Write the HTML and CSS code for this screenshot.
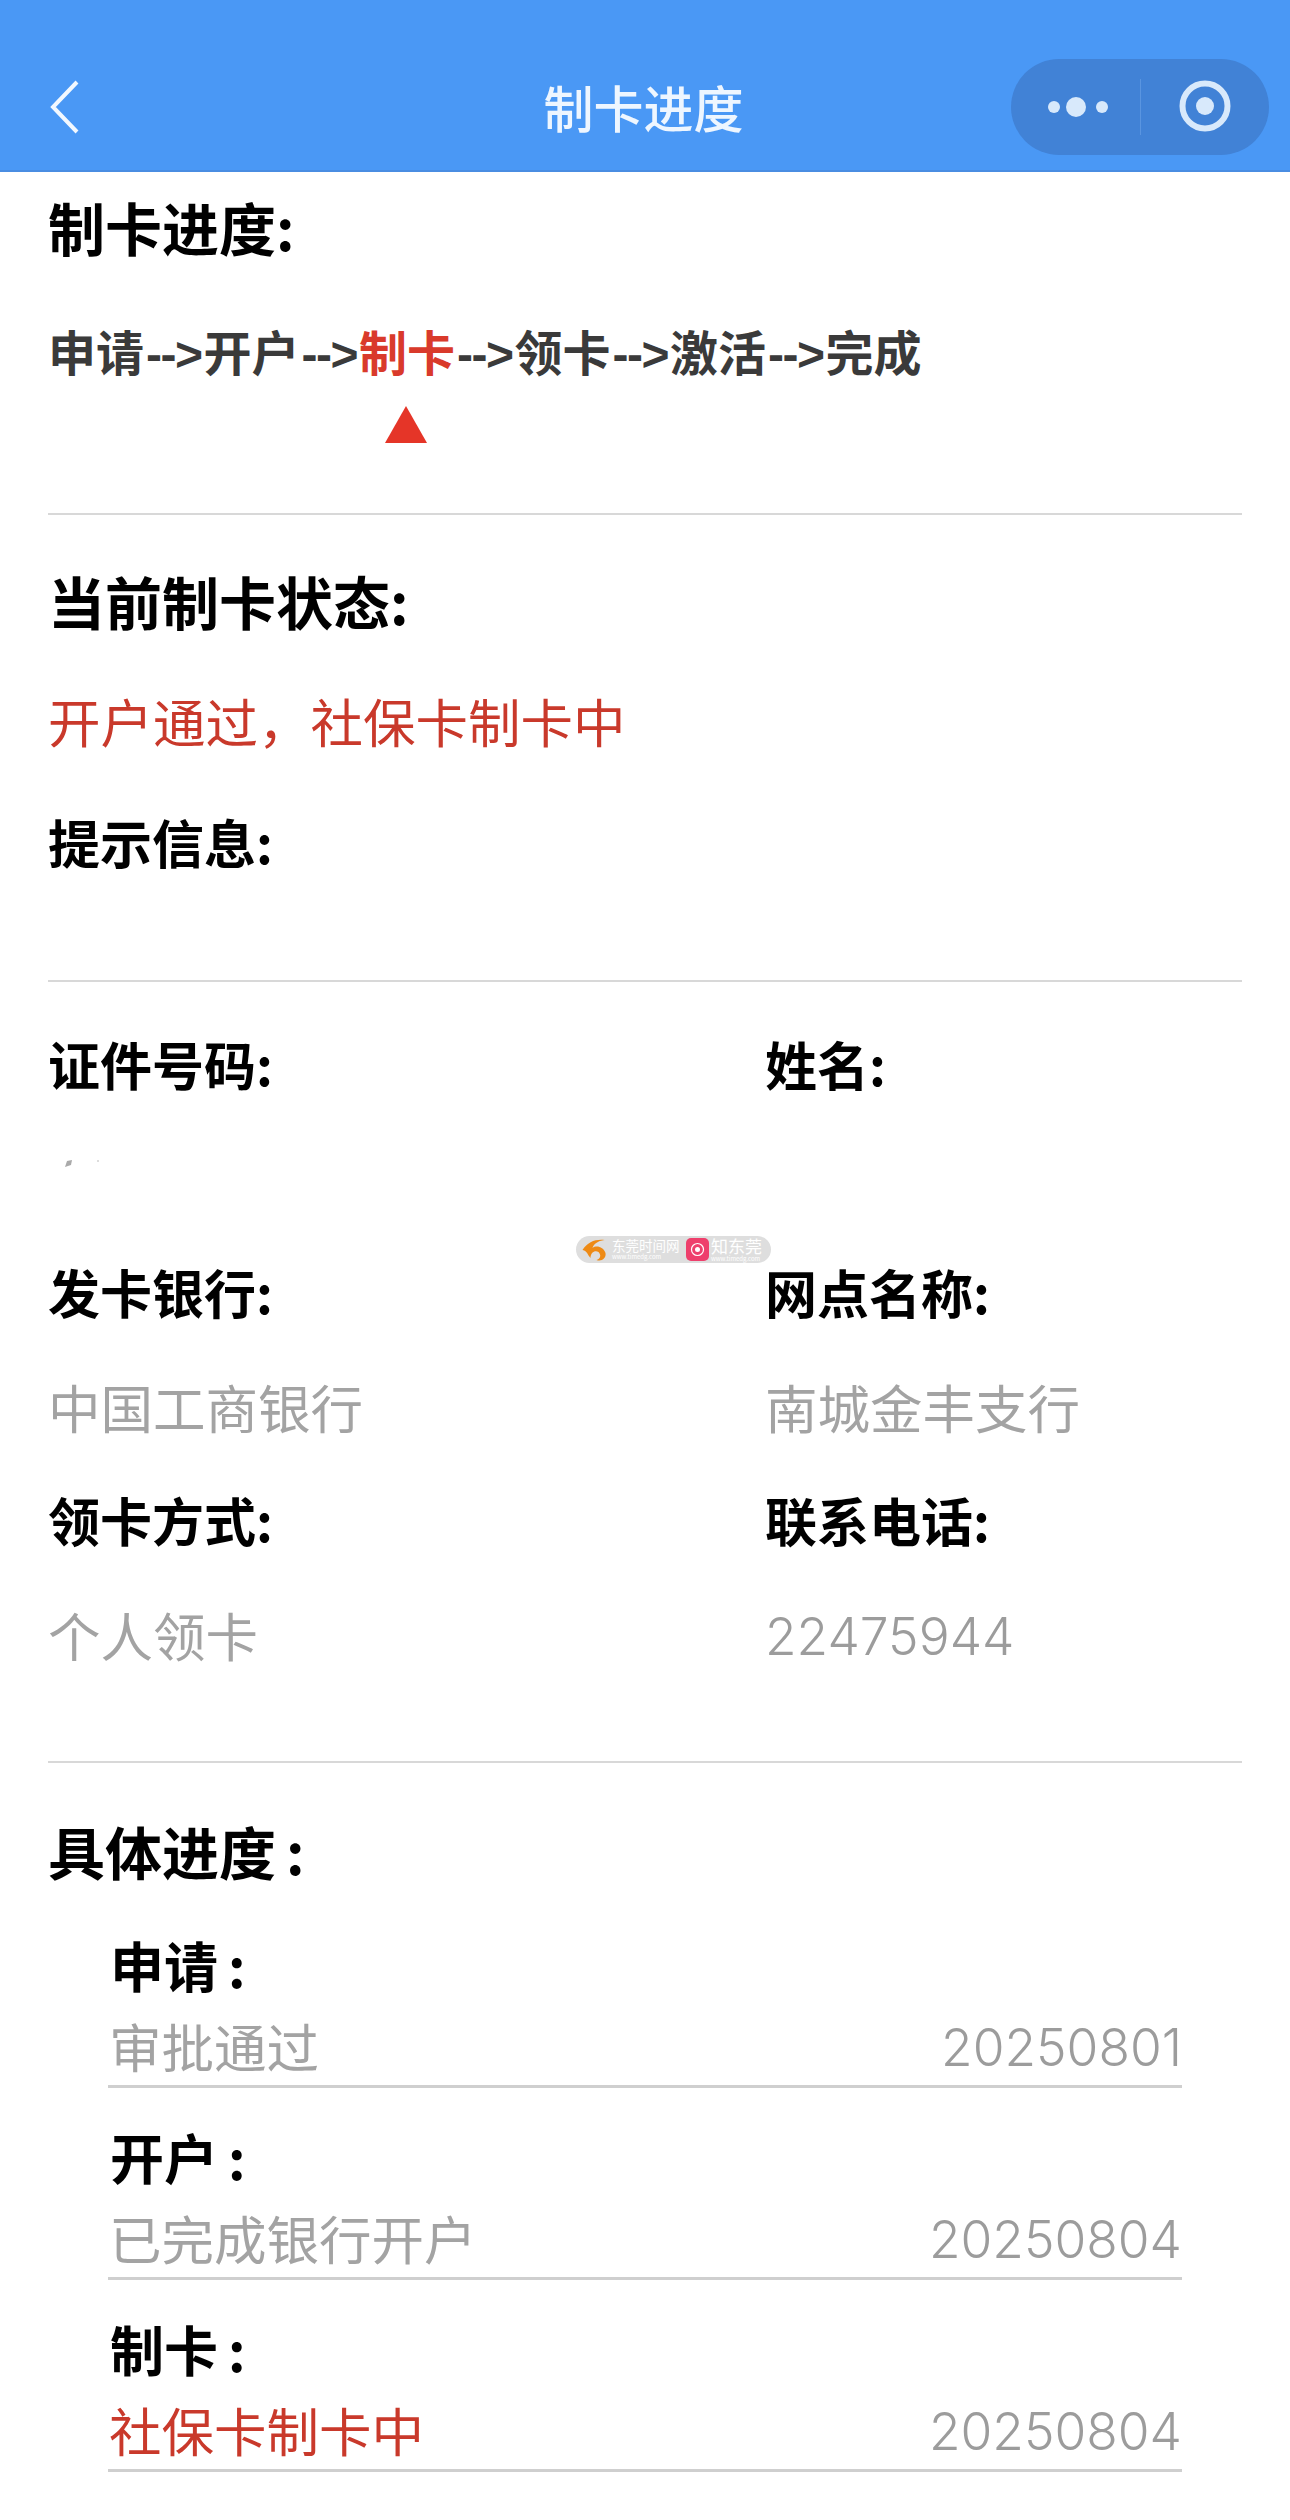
FILE: index.html
```html
<!DOCTYPE html>
<html lang="zh-CN">
<head>
    <meta charset="UTF-8">
    <meta name="viewport" content="width=device-width, initial-scale=1.0">
    <title>制卡进度</title>
    <link rel="stylesheet" href="styles.css">
</head>
<body>
    <header class="navbar">
        <div class="nav-left">
            <svg class="back-icon" width="30" height="54" viewBox="0 0 30 54">
                <path d="M27 2 L3 27 L27 52" fill="none" stroke="#f2f8ff" stroke-width="4"/>
            </svg>
        </div>
        <div class="nav-title">制卡进度</div>
        <div class="nav-right">
            <div class="capsule">
                <svg width="258" height="96" viewBox="0 0 258 96">
                    <circle cx="43" cy="48" r="6" fill="#d8e9fb"/>
                    <circle cx="65" cy="48" r="10" fill="#d8e9fb"/>
                    <circle cx="91" cy="48" r="6" fill="#d8e9fb"/>
                    <rect x="129" y="20" width="1" height="56" fill="#5a95e0"/>
                    <circle cx="194" cy="47" r="22.5" fill="none" stroke="#d8e9fb" stroke-width="6"/>
                    <circle cx="194" cy="47" r="9" fill="#d8e9fb"/>
                </svg>
            </div>
        </div>
    </header>

    <section class="section section-flow">
        <h2 class="heading">制卡进度:</h2>
        <div class="flow">
            <span>申请</span><span class="arrow">--&gt;</span><span>开户</span><span class="arrow">--&gt;</span><span class="current">制卡</span><span class="arrow">--&gt;</span><span>领卡</span><span class="arrow">--&gt;</span><span>激活</span><span class="arrow">--&gt;</span><span>完成</span>
        </div>
        <div class="marker"></div>
    </section>

    <section class="section section-status">
        <h2 class="heading">当前制卡状态:</h2>
        <p class="status-text">开户通过&#xFF0C;社保卡制卡中</p>
        <h3 class="label">提示信息:</h3>
    </section>

    <section class="section section-info">
        <div class="info-grid">
            <div class="label">证件号码:</div>
            <div class="label">姓名:</div>
            <div class="value">
                <svg class="smudge" width="40" height="10" viewBox="0 0 40 10">
                    <path d="M3 9 L5 3 L10 2 L9 7 Z" fill="#aaa"/>
                    <path d="M35 2 h2 v2 h-2 Z" fill="#ddd"/>
                </svg>
            </div>
            <div class="value"></div>
            <div class="label">发卡银行:</div>
            <div class="label">网点名称:</div>
            <div class="value">中国工商银行</div>
            <div class="value">南城金丰支行</div>
            <div class="label">领卡方式:</div>
            <div class="label">联系电话:</div>
            <div class="value">个人领卡</div>
            <div class="value num">22475944</div>
        </div>
    </section>

    <section class="section section-steps">
        <h2 class="heading">具体进度<span class="colon">:</span></h2>
        <div class="step">
            <div class="step-name">申请<span class="colon">:</span></div>
            <div class="step-row">
                <span>审批通过</span>
                <span class="num">20250801</span>
            </div>
        </div>
        <div class="step">
            <div class="step-name">开户<span class="colon">:</span></div>
            <div class="step-row">
                <span>已完成银行开户</span>
                <span class="num">20250804</span>
            </div>
        </div>
        <div class="step">
            <div class="step-name">制卡<span class="colon">:</span></div>
            <div class="step-row">
                <span class="red">社保卡制卡中</span>
                <span class="num">20250804</span>
            </div>
        </div>
    </section>

    <!-- watermark sits over the page -->
    <div class="watermark">
        <svg class="wm-logo" width="27" height="24" viewBox="0 0 26 24">
            <path d="M1 12 C6 4 14 1 23 2 C16 3 12 6 11 10 C15 7 22 9 24 15 C25 20 20 24 15 22 C19 21 20 17 17 14 C13 12 9 15 9 20 C6 17 6 13 1 12 Z" fill="#ee8a14"/>
        </svg>
        <div class="wm-text wm-first">
            <div class="wm-big">东莞时间网</div>
            <div class="wm-small">www.timedg.com</div>
        </div>
        <svg class="wm-logo" width="23" height="23" viewBox="0 0 23 23">
            <rect width="23" height="23" rx="5" fill="#ee3f6c"/>
            <circle cx="11.5" cy="11.5" r="6" fill="none" stroke="#fff" stroke-width="1.2"/>
            <circle cx="11.5" cy="11.5" r="2.5" fill="#fff"/>
        </svg>
        <div class="wm-text wm-second">
            <div class="wm-big wm-wide">知东莞</div>
            <div class="wm-small">www.timedg.com</div>
        </div>
    </div>
</body>
</html>
```

FILE: styles.css
```css
body {
    margin: 0;
    width: 1290px;
    height: 2520px;
    overflow: hidden;
    position: relative;
    background-color: #fff;
    color: #000;
    font-family: "Noto Sans CJK SC", "Noto Sans", sans-serif;
}
h2, h3, p {
    margin: 0;
}

/* top bar */
.navbar {
    box-sizing: border-box;
    height: 172px;
    padding: 59px 21px 15px;
    display: grid;
    grid-template-columns: 1fr auto 1fr;
    align-items: center;
    background-color: #4a98f5;
    border-bottom: 2px solid #4a8de2;
}
.nav-left {
    padding-left: 29px;
}
.back-icon {
    display: block;
}
.nav-title {
    margin-left: -3px;
    padding-bottom: 2px;
    font-size: 50px;
    font-weight: 500;
    color: #eef6ff;
}
.nav-right {
    display: flex;
    justify-content: flex-end;
}
.capsule {
    width: 258px;
    height: 96px;
    border-radius: 48px;
    background-color: #4182d6;
}
.capsule svg {
    display: block;
}

/* sections */
.section {
    box-sizing: border-box;
    margin: 0 48px;
    border-bottom: 2px solid #d8d8d8;
}
.section:last-of-type {
    border-bottom: none;
}
.heading {
    font-size: 57px;
    font-weight: 700;
    line-height: 64px;
}
.label {
    font-size: 52px;
    font-weight: 700;
    line-height: 60px;
}
.colon {
    margin-left: 10px;
}

.section-flow {
    height: 343px;
    padding-top: 22px;
}
.flow {
    height: 60px;
    margin-top: 62px;
    font-size: 48px;
    font-weight: 700;
    line-height: 60px;
    color: #3a3a3a;
    white-space: nowrap;
}
.flow .current {
    color: #d93a2b;
}
.arrow {
    font-family: "Liberation Sans", sans-serif;
    letter-spacing: -1.5px;
    margin: 0 2px;
}
.marker {
    width: 0;
    height: 0;
    margin: 26px 0 0 337px;
    border-left: 21px solid transparent;
    border-right: 21px solid transparent;
    border-bottom: 37px solid #e53528;
}

.section-status {
    height: 467px;
    padding-top: 53px;
}
.status-text {
    margin-top: 58px;
    font-size: 52.5px;
    line-height: 60px;
    color: #c9392b;
}
.section-status .label {
    margin-top: 62px;
}

.section-info {
    height: 781px;
    padding-top: 25px;
}
.info-grid {
    display: grid;
    grid-template-columns: 717px 1fr;
    grid-auto-rows: 114px;
    align-items: center;
}
.value {
    font-size: 52.5px;
    line-height: 60px;
    color: #a3a3a3;
    min-height: 60px;
}
.smudge {
    display: block;
    margin: 10px 0 0 14px;
}
.num {
    padding-top: 4px;
    font-family: "Inter", sans-serif;
    font-weight: 300;
    font-size: 51.5px;
    color: #9c9c9c;
}

.section-steps {
    padding-top: 55px;
}
.step {
    margin: 0 60px 39px;
    border-bottom: 3px solid #cfcfcf;
}
.section-steps .heading {
    margin-bottom: 53px;
}
.step-name {
    font-size: 54px;
    font-weight: 700;
    line-height: 60px;
    padding-left: 2px;
}
.step-row {
    display: flex;
    justify-content: space-between;
    align-items: center;
    height: 60px;
    margin-top: 20px;
    padding: 0 0 10px 1px;
    font-size: 52.5px;
    line-height: 60px;
    color: #a3a3a3;
}
.step-row .red {
    color: #c9392b;
}

/* watermark */
.watermark {
    position: absolute;
    left: 576px;
    top: 1236px;
    width: 195px;
    height: 27px;
    box-sizing: border-box;
    padding-left: 5px;
    display: flex;
    align-items: center;
    border-radius: 14px;
    background-color: #dedede;
    color: #fff;
}
.wm-logo {
    flex: none;
}
.wm-first {
    width: 68px;
    margin: 0 6px 0 4px;
}
.wm-second {
    width: 51px;
    margin-left: 2px;
}
.wm-big {
    font-size: 13.5px;
    line-height: 15px;
    white-space: nowrap;
}
.wm-wide {
    font-size: 17px;
    line-height: 18px;
}
.wm-small {
    font-size: 6px;
    line-height: 8px;
    white-space: nowrap;
}
```
